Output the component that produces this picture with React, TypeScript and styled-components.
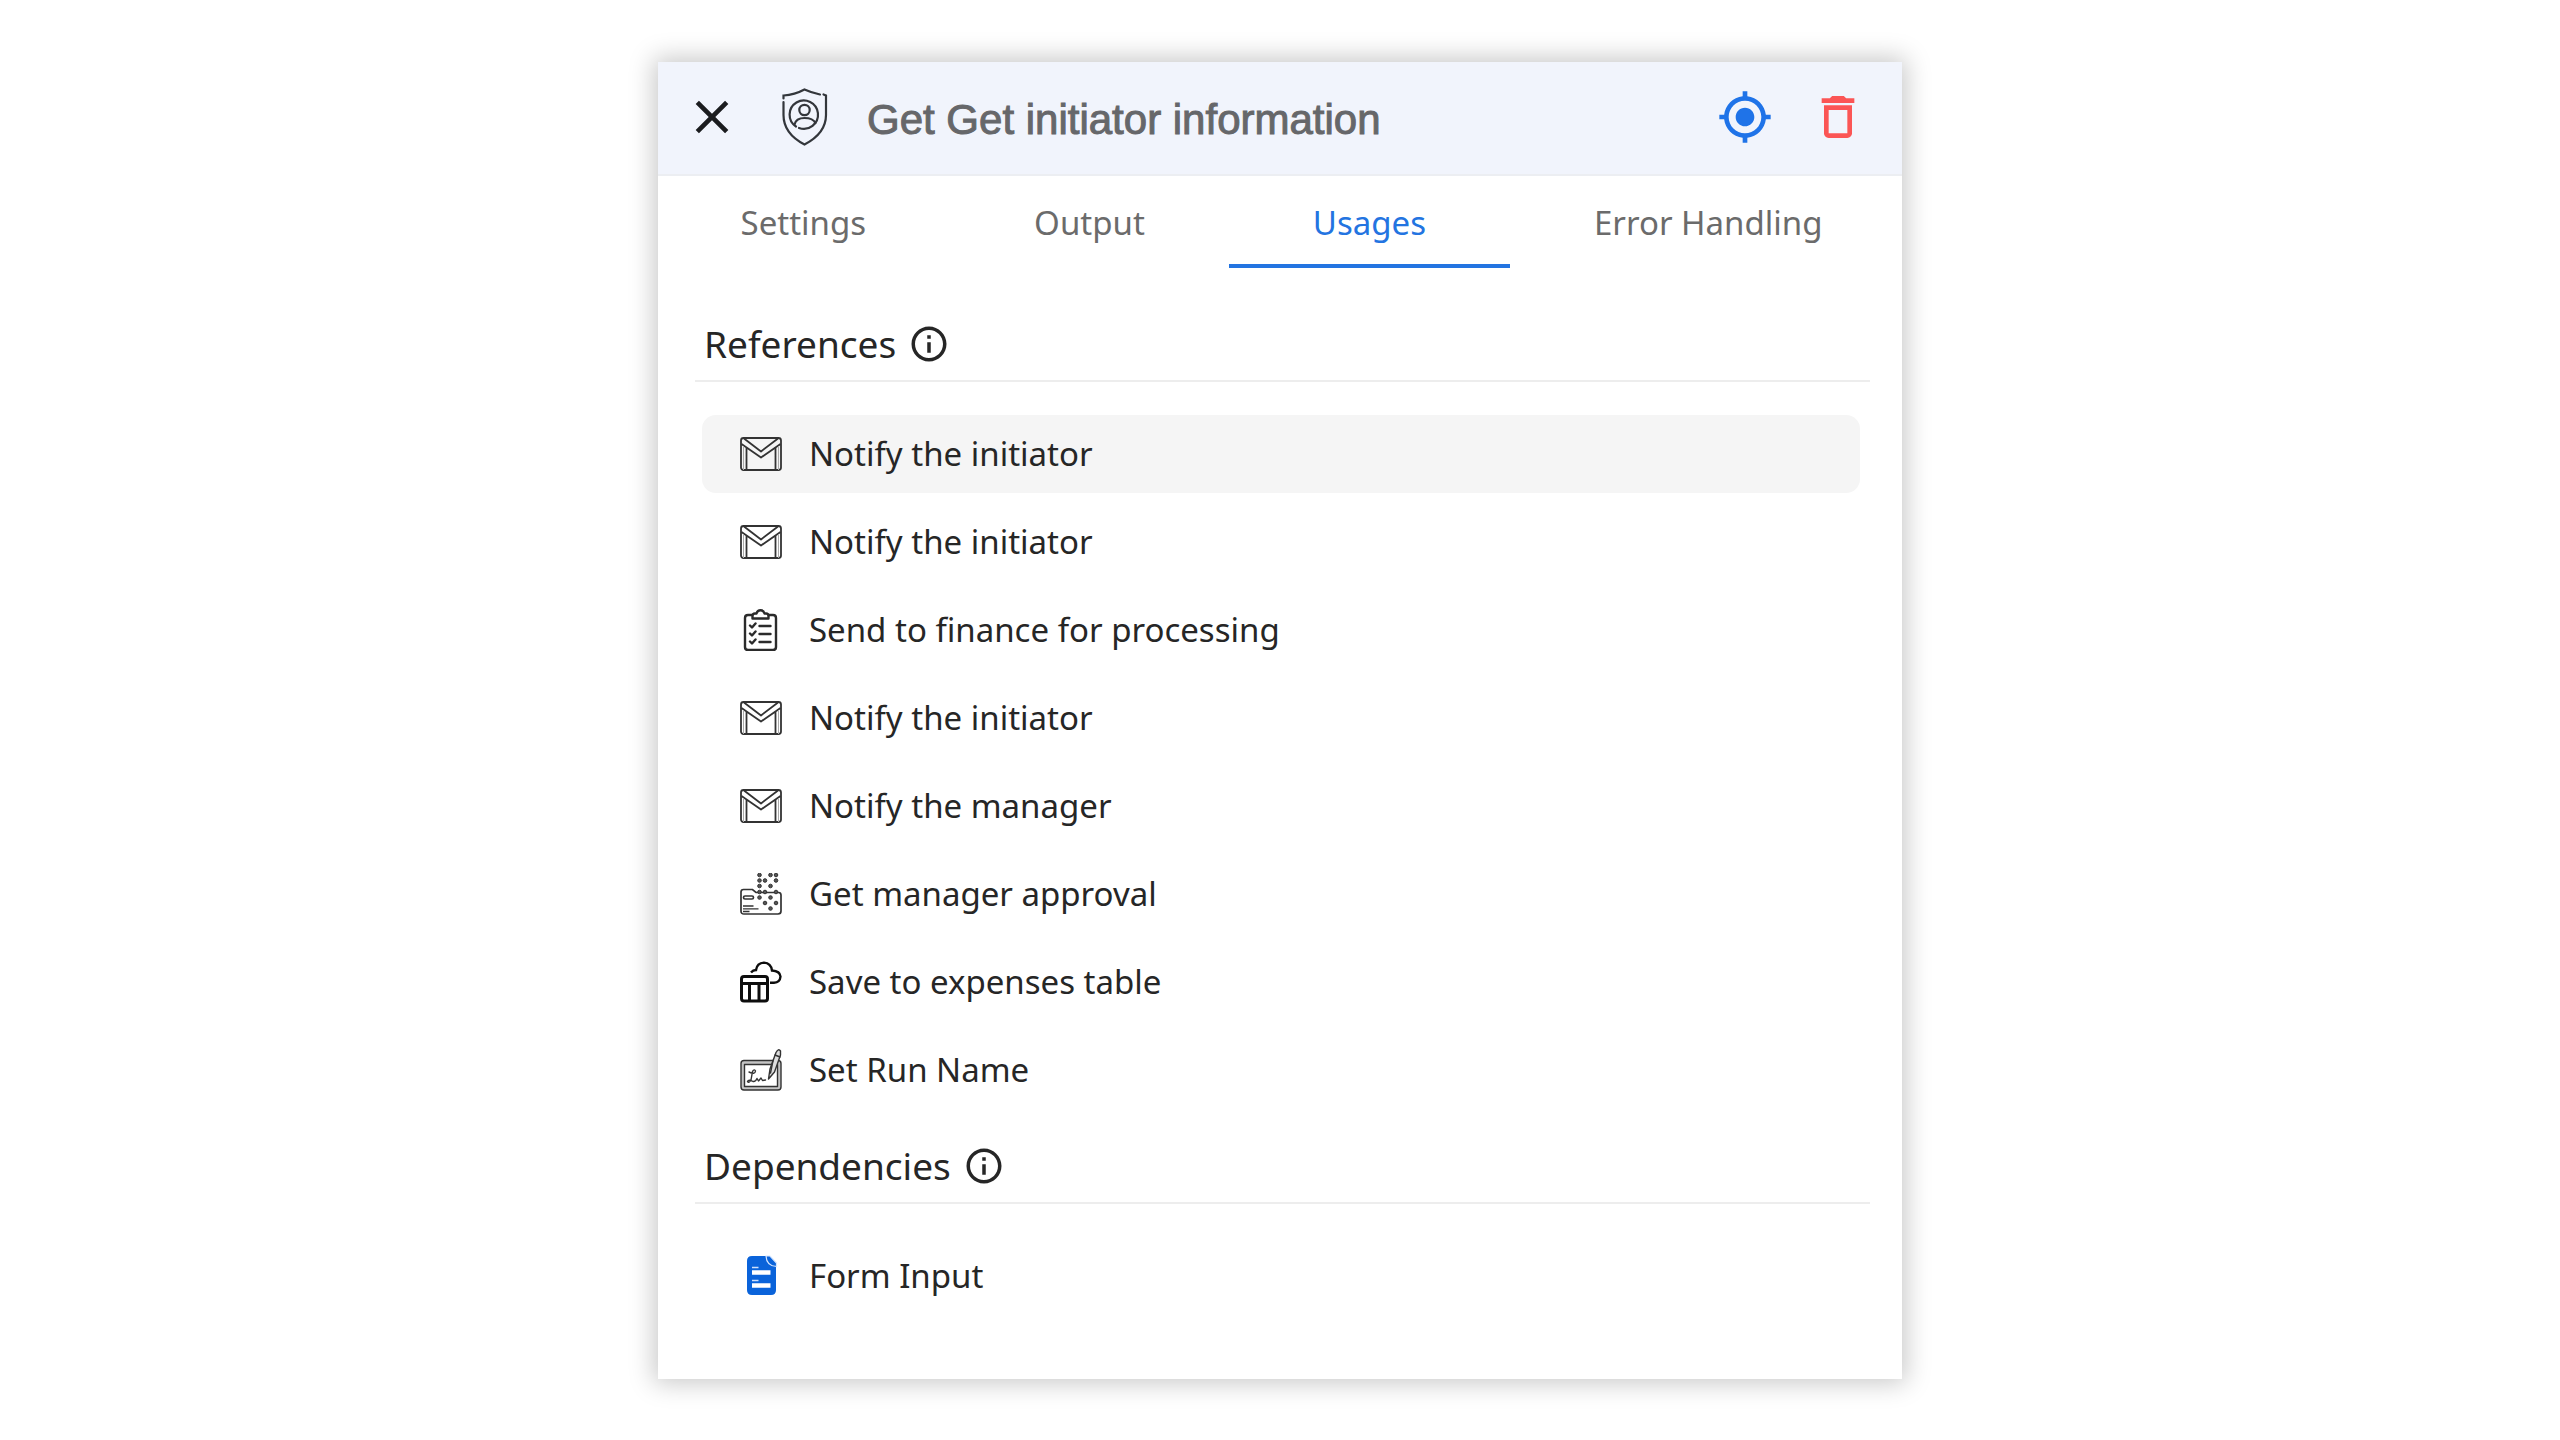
import React, { useState } from "react";
import styled, { createGlobalStyle } from "styled-components";

const GlobalStyle = createGlobalStyle`
  *, *::before, *::after { box-sizing: border-box; }
  body { margin: 0; background: #fff; font-family: "Noto Sans", sans-serif; color: #262626; }
  button { font: inherit; color: inherit; background: none; border: 0; padding: 0; cursor: pointer; }
`;

const Page = styled.main`
  display: flex;
  justify-content: center;
  align-items: flex-start;
  padding: 62px 32px 60px;
`;

const Panel = styled.section`
  width: 100%;
  max-width: 1244px;
  background: #fff;
  box-shadow: 0 0 24px 4px rgba(0, 0, 0, 0.22);
`;

const Header = styled.header`
  display: flex;
  align-items: center;
  padding: 24px 36px 26px 26px;
  background: #f1f4fc;
  border-bottom: 2px solid #eceef2;
`;

const IconButton = styled.button<{ $color: string }>`
  display: flex;
  color: ${(p) => p.$color};
`;

const Brand = styled.span`
  display: flex;
  margin: 0 39px 0 42px;
`;

const Title = styled.h1`
  flex: 1;
  margin: 0;
  padding-top: 6px;
  font-family: "Liberation Sans", Arial, sans-serif;
  font-size: 42px;
  font-weight: 400;
  line-height: 56px;
  color: #66676a;
  -webkit-text-stroke: 1px #66676a;
`;

const Actions = styled.div`
  display: flex;
  gap: 37px;
`;

const Tabs = styled.nav`
  display: flex;
  justify-content: center;
  padding-left: 3px;
`;

const Tab = styled.button<{ $active: boolean }>`
  flex: none;
  height: 92px;
  padding: 5px 84px 0;
  border-bottom: 4px solid ${(p) => (p.$active ? "#2374e1" : "transparent")};
  font-size: 33px;
  line-height: 44px;
  color: ${(p) => (p.$active ? "#2374e1" : "#6b6b6b")};
`;

const Body = styled.div`
  display: flex;
  flex-direction: column;
  gap: 31px;
  padding: 50px 32px 64px 37px;
`;

const Group = styled.section`
  display: flex;
  flex-direction: column;
  gap: 33px;
`;

const GroupHead = styled.div`
  display: flex;
  align-items: center;
  gap: 12px;
  padding: 0 9px 10px;
  border-bottom: 2px solid #ededed;
`;

const GroupTitle = styled.h2`
  margin: 0;
  font-size: 37px;
  font-weight: 400;
  line-height: 52px;
`;

const List = styled.ul`
  display: flex;
  flex-direction: column;
  gap: 10px;
  margin: 0;
  padding: 0 10px 0 7px;
  list-style: none;
`;

const Row = styled.button<{ $selected: boolean }>`
  display: flex;
  align-items: center;
  gap: 27px;
  width: 100%;
  height: 78px;
  padding: 0 38px;
  border-radius: 14px;
  font-size: 33px;
  line-height: 48px;
  text-align: left;
  background: ${(p) => (p.$selected ? "#f5f5f5" : "transparent")};
`;

const CloseIcon = () => (
  <svg width="56" height="56" viewBox="0 0 24 24" fill="currentColor" aria-hidden="true">
    <path d="M19 6.41 17.59 5 12 10.59 6.41 5 5 6.41 10.59 12 5 17.59 6.41 19 12 13.41 17.59 19 19 17.59 13.41 12z" />
  </svg>
);

const TargetIcon = () => (
  <svg width="56" height="56" viewBox="0 0 24 24" fill="currentColor" aria-hidden="true">
    <path d="M12 8c-2.21 0-4 1.79-4 4s1.79 4 4 4 4-1.79 4-4-1.79-4-4-4zm8.94 3c-.46-4.17-3.77-7.48-7.94-7.94V1h-2v2.06C6.83 3.52 3.52 6.83 3.06 11H1v2h2.06c.46 4.17 3.77 7.48 7.94 7.94V23h2v-2.06c4.17-.46 7.48-3.77 7.94-7.94H23v-2h-2.06zM12 19c-3.87 0-7-3.13-7-7s3.13-7 7-7 7 3.13 7 7-3.13 7-7 7z" />
  </svg>
);

const TrashIcon = () => (
  <svg width="56" height="56" viewBox="0 0 24 24" fill="currentColor" aria-hidden="true">
    <path d="M6 19c0 1.1.9 2 2 2h8c1.1 0 2-.9 2-2V7H6v12zM8 9h8v10H8V9zm7.500-5-1-1h-5l-1 1H5v2h14V4z" />
  </svg>
);

const ShieldIcon = () => (
  <svg width="46" height="58" viewBox="0 0 46 58" fill="none" stroke="#33363b" strokeWidth="2.200" strokeLinecap="round" aria-hidden="true">
    <path d="M1.500 10.500V7.500C9 7 16 5 22.500 1.500C28 4 33 5.500 38 6.500M41.500 6.500L44 7.500V27C44 40 35 50 22.500 56.500C10 50 1.500 40 1.500 27V14" />
    <path d="M14 38.500A14.200 14.200 0 1 1 17 40" />
    <circle cx="22.500" cy="22" r="5.200" />
    <path d="M12.500 36.500Q14 30 22.500 30T33.500 35" />
  </svg>
);

const InfoIcon = () => (
  <svg width="42" height="42" viewBox="0 0 24 24" fill="currentColor" aria-hidden="true">
    <path d="M11 7h2v2h-2zm0 4h2v6h-2zm1-9C6.480 2 2 6.480 2 12s4.480 10 10 10 10-4.480 10-10S17.520 2 12 2zm0 18c-4.410 0-8-3.590-8-8s3.590-8 8-8 8 3.590 8 8-3.590 8-8 8z" />
  </svg>
);

const MailIcon = () => (
  <svg width="42" height="42" viewBox="0 0 42 42" fill="none" stroke="#333" strokeWidth="1.800" strokeLinejoin="round" aria-hidden="true">
    <rect x="1" y="5" width="40" height="32" rx="2.500" />
    <path d="M4 5.500L21 18.500L38 5.500M1.500 11L21 24.500L40.500 11M6.500 14.500V37M35.500 14.500V37" />
    <path d="M3.500 13V37M38.500 13V37" stroke="#aaa" strokeWidth="1" />
  </svg>
);

const ClipboardIcon = () => (
  <svg width="42" height="42" viewBox="0 0 42 42" fill="none" stroke="#2b2b2b" strokeWidth="2.400" strokeLinecap="round" strokeLinejoin="round" aria-hidden="true">
    <path d="M12 6H8Q5 6 5 9V38Q5 41 8 41H33Q36 41 36 38V9Q36 6 33 6H29" />
    <path d="M12.500 9.500V7Q12.500 4.500 15 4.500H16.500Q17.500 1.200 20.500 1.200T24.500 4.500H26Q28.500 4.500 28.500 7V9.500Z" />
    <path d="M10 16.500L12 18.500L15.500 14.500M10 24.500L12 26.500L15.500 22.500M10 32.500L12 34.500L15.500 30.500M19.500 17H30.500M19.500 25H30.500M19.500 33H30.500" />
  </svg>
);

const dots = [
  [19.5, 2], [30.5, 2], [36, 2],
  [19.5, 7.5], [25, 7.5], [36, 7.5],
  [19.5, 13], [30.5, 13],
  [19.5, 19], [25, 19], [36, 19],
  [19.5, 24.5], [30.5, 24.5],
  [25, 30], [36, 30],
  [30.5, 35.5],
];

const ApprovalIcon = () => (
  <svg width="42" height="42" viewBox="0 0 42 42" fill="none" stroke="#333" strokeWidth="1.700" aria-hidden="true">
    <path d="M1 38V19Q1 16.500 3.500 16.500H12.500L16 19.500H38.500Q41 19.500 41 22V38Q41 41 38 41H4Q1 41 1 38Z" />
    <rect x="3.500" y="23" width="10" height="3" rx="1.500" />
    <path d="M3 33H13.500M3 35.800H18.500M3 38.500H9.500" strokeWidth="1.300" />
    {dots.map(([x, y]) => (
      <circle key={`${x}-${y}`} cx={x} cy={y} r="1.800" fill="#555" strokeWidth="1" />
    ))}
  </svg>
);

const TableCloudIcon = () => (
  <svg width="42" height="42" viewBox="0 0 42 42" fill="none" stroke="#0d0d0d" strokeWidth="3" aria-hidden="true">
    <rect x="1.500" y="15.500" width="26" height="24.500" rx="2.500" />
    <path d="M1.500 22.500H27M9.500 22.500V39.500M19 22.500V39.500" />
    <path d="M11 11.500Q13 9 16 9Q17 2 24 1.600Q31 2 32 9.500Q40 10 40.500 15.500Q40 21.500 34 21.800H30" strokeWidth="2.400" />
  </svg>
);

const SignIcon = () => (
  <svg width="42" height="42" viewBox="0 0 42 42" fill="none" stroke="#333" strokeWidth="1.400" strokeLinecap="round" strokeLinejoin="round" aria-hidden="true">
    <rect x="1" y="11.500" width="40" height="29.500" rx="3" fill="#c4c4c4" />
    <rect x="4.500" y="15.500" width="33" height="22" fill="#fff" />
    <path d="M9 23Q15 26 15.500 22Q14.500 19.500 12.500 22.500L11 31Q9 34.500 7.500 32.500Q8.500 30 13 32.500Q15.500 33 17 29.500L18.500 32L21 29L22.500 31.500L25.500 31" />
    <path d="M28.500 30L30 20L36 3.500Q38.500-1 40.500 2V6L34.500 23Z" fill="#ddd" />
    <path d="M35 6L40 8M33 11.500L30.500 24" />
  </svg>
);

const FormIcon = () => (
  <svg width="42" height="42" viewBox="0 0 42 42" fill="none" aria-hidden="true">
    <path d="M12 1H26L36 11.500V35Q36 40 31 40H12Q7 40 7 35V6Q7 1 12 1Z" fill="#0a63da" />
    <path d="M26 1Q26.500 11 36.500 11.500V8L30 1Z" fill="#0a63da" stroke="#d5e6ff" strokeWidth="1.200" />
    <path d="M12 17.500H30.500M12 30.500H30.500" stroke="#fff" strokeWidth="4.600" />
    <path d="M12 12.500H18.500M12 25.500H18.500" stroke="#cfe0fa" strokeWidth="1.600" />
  </svg>
);

type Item = { icon: React.FC; label: string };

const references: Item[] = [
  { icon: MailIcon, label: "Notify the initiator" },
  { icon: MailIcon, label: "Notify the initiator" },
  { icon: ClipboardIcon, label: "Send to finance for processing" },
  { icon: MailIcon, label: "Notify the initiator" },
  { icon: MailIcon, label: "Notify the manager" },
  { icon: ApprovalIcon, label: "Get manager approval" },
  { icon: TableCloudIcon, label: "Save to expenses table" },
  { icon: SignIcon, label: "Set Run Name" },
];

const dependencies: Item[] = [{ icon: FormIcon, label: "Form Input" }];

const tabs = ["Settings", "Output", "Usages", "Error Handling"];

function UsageGroup({ title, items, selected }: { title: string; items: Item[]; selected?: number }) {
  return (
    <Group>
      <GroupHead>
        <GroupTitle>{title}</GroupTitle>
        <IconButton $color="#262626" type="button" aria-label={`About ${title}`}>
          <InfoIcon />
        </IconButton>
      </GroupHead>
      <List>
        {items.map(({ icon: Icon, label }, i) => (
          <li key={i}>
            <Row type="button" $selected={i === selected}>
              <Icon />
              {label}
            </Row>
          </li>
        ))}
      </List>
    </Group>
  );
}

export default function App() {
  const [active, setActive] = useState("Usages");
  return (
    <>
      <GlobalStyle />
      <Page>
        <Panel>
          <Header>
            <IconButton $color="#1b1c1f" type="button" aria-label="Close">
              <CloseIcon />
            </IconButton>
            <Brand>
              <ShieldIcon />
            </Brand>
            <Title>Get Get initiator information</Title>
            <Actions>
              <IconButton $color="#1f73e8" type="button" aria-label="Locate step">
                <TargetIcon />
              </IconButton>
              <IconButton $color="#fb5555" type="button" aria-label="Delete step">
                <TrashIcon />
              </IconButton>
            </Actions>
          </Header>
          <Tabs role="tablist">
            {tabs.map((name) => (
              <Tab
                key={name}
                type="button"
                role="tab"
                aria-selected={name === active}
                $active={name === active}
                onClick={() => setActive(name)}
              >
                {name}
              </Tab>
            ))}
          </Tabs>
          <Body>
            <UsageGroup title="References" items={references} selected={0} />
            <UsageGroup title="Dependencies" items={dependencies} />
          </Body>
        </Panel>
      </Page>
    </>
  );
}
